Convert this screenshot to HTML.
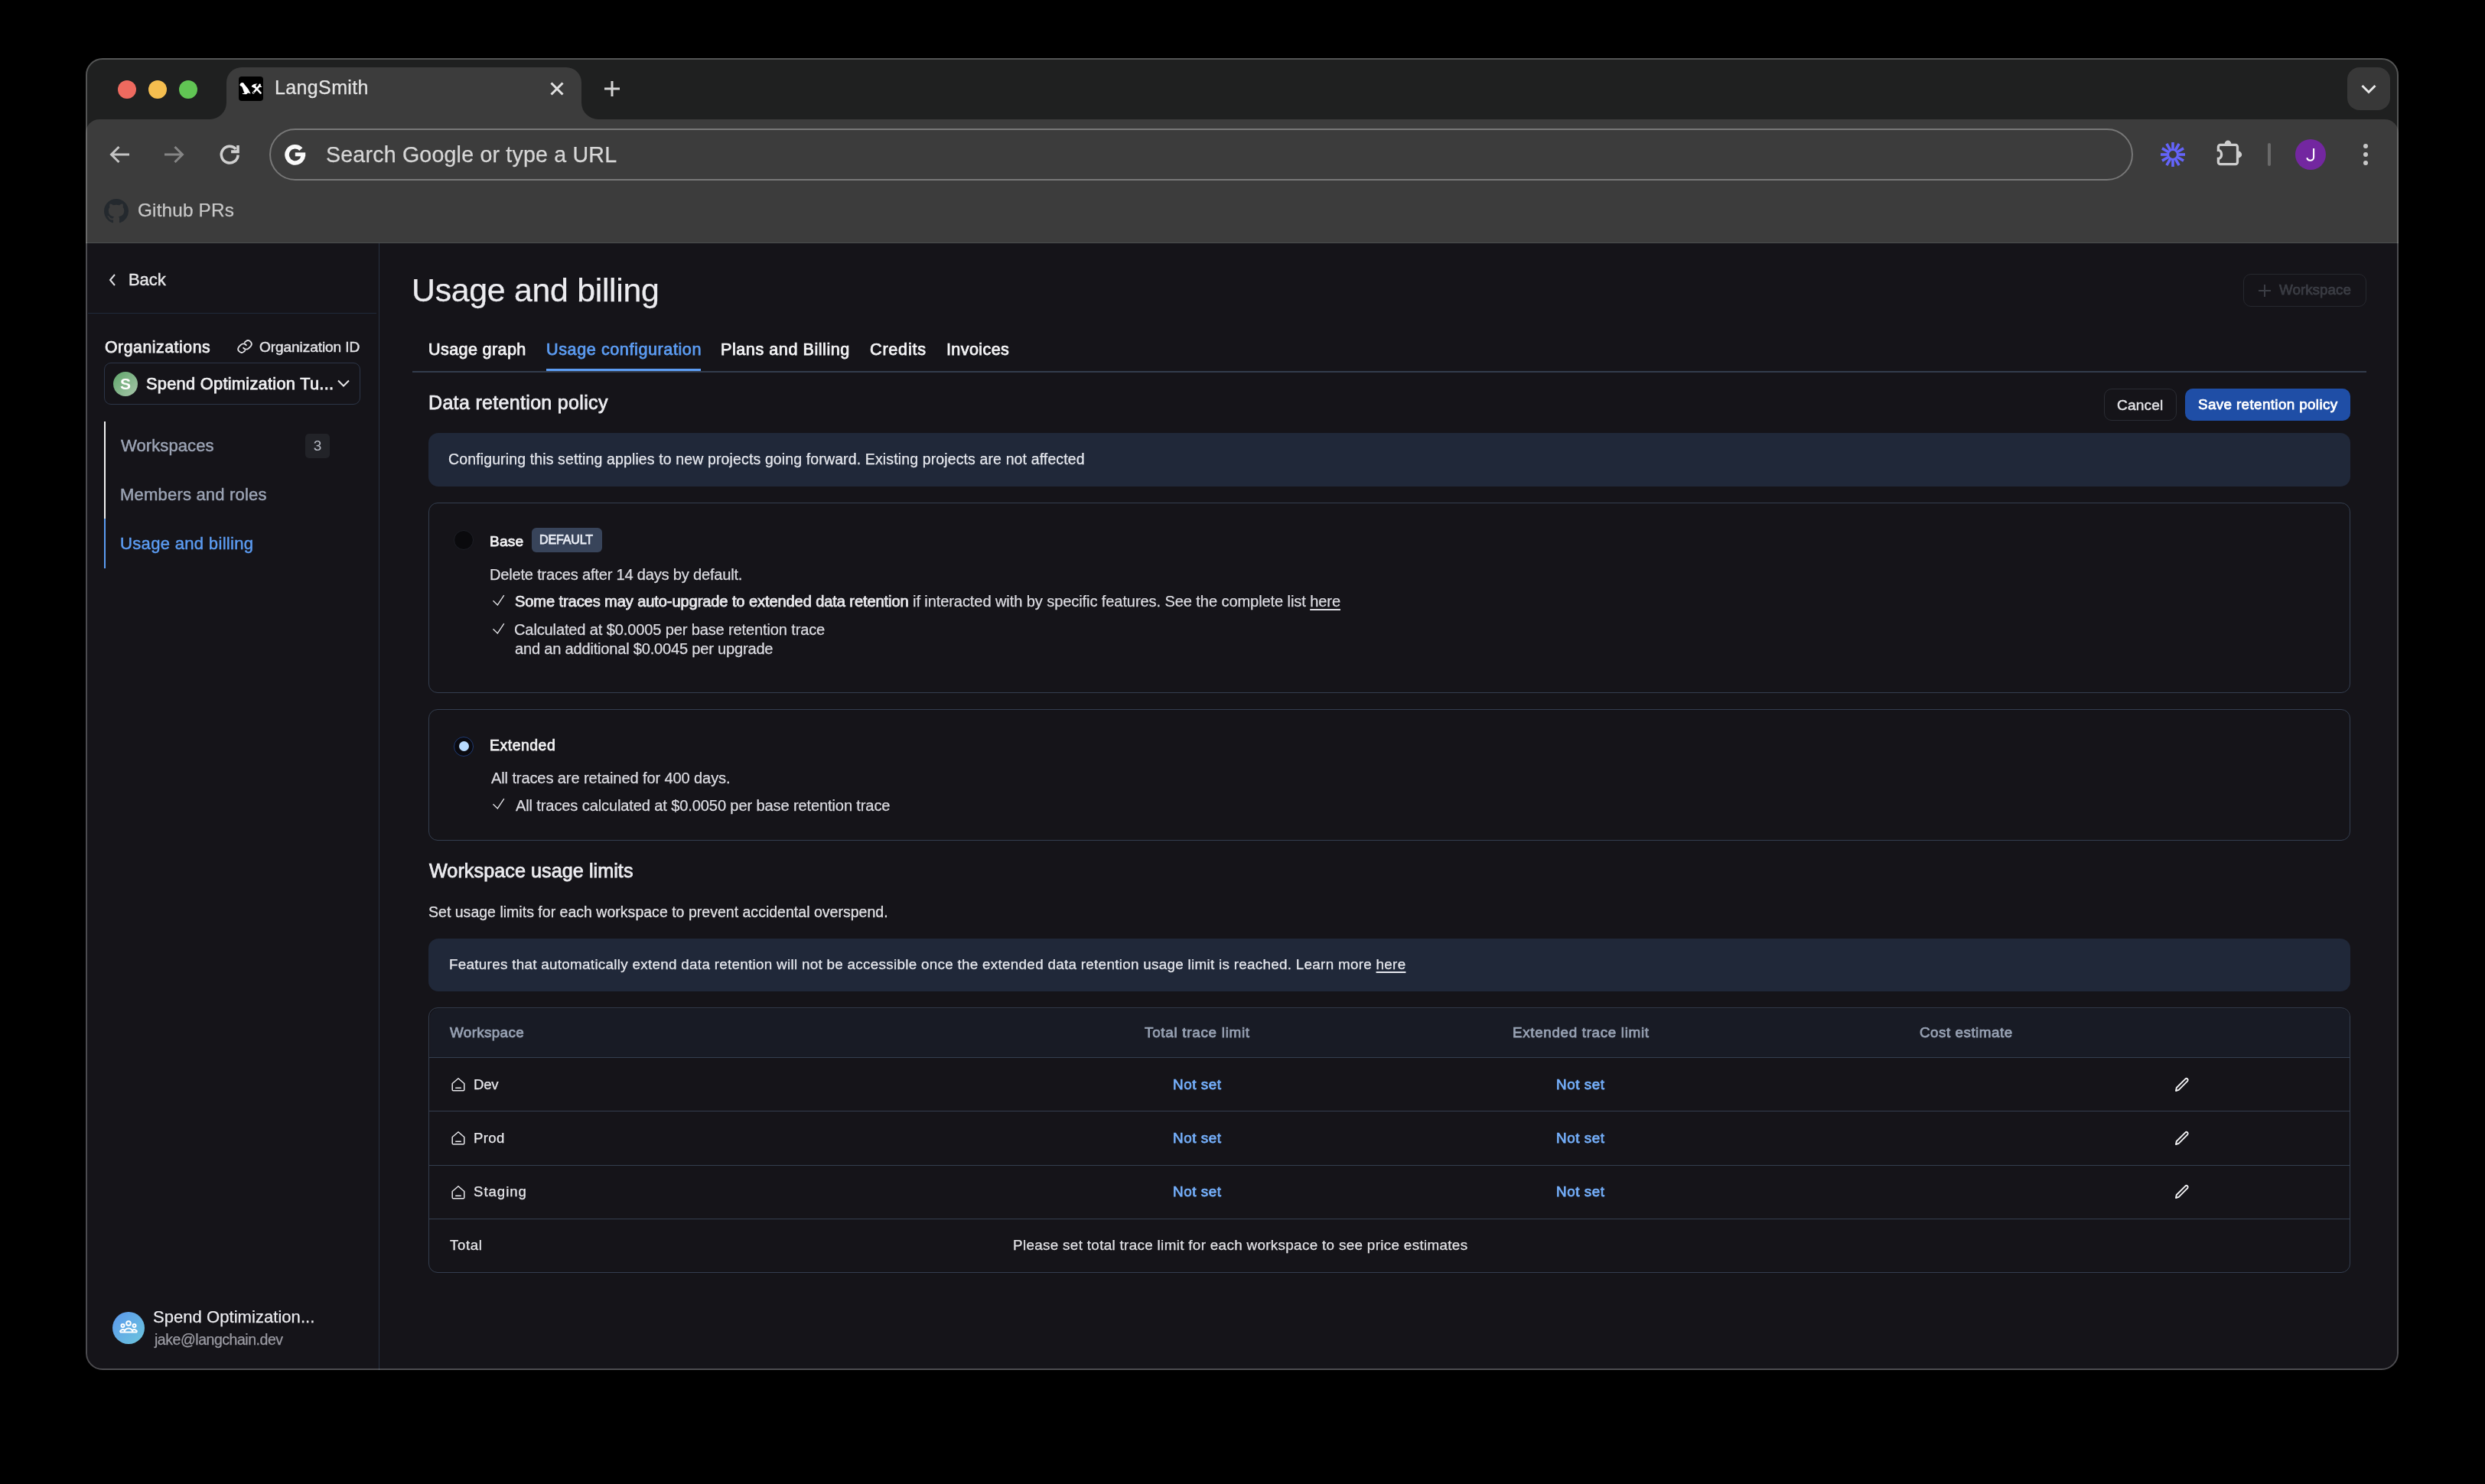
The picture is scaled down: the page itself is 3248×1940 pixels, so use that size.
<!DOCTYPE html>
<html><head><meta charset="utf-8"><title>LangSmith</title>
<style>
html,body{margin:0;padding:0;background:#000;}
body{width:3248px;height:1940px;position:relative;overflow:hidden;font-family:"Liberation Sans",sans-serif;}
.b{position:absolute;}
.t{position:absolute;white-space:pre;font-family:"Liberation Sans",sans-serif;will-change:transform;}
u{text-decoration:underline;text-underline-offset:3px;text-decoration-thickness:1.5px;}
b.sb{font-weight:400;-webkit-text-stroke:0.75px currentColor;color:#e8e8ec;}
</style></head><body>
<div id="win" style="position:absolute;left:0;top:0;width:3248px;height:1940px;clip-path:inset(76px 113px 149px 112px round 22px);">
<div class="b" style="left:112px;top:76px;width:3023px;height:114px;background:#1f2020;"></div>
<div class="b" style="left:112px;top:156px;width:3023px;height:162px;background:#3c3c3c;border-radius:18px 18px 0 0;"></div>
<div class="b" style="left:296px;top:88px;width:464px;height:70px;background:#3c3c3c;border-radius:20px 20px 0 0;"></div>
<div class="b" style="left:274px;top:134px;width:22px;height:22px;background:#3c3c3c;"></div>
<div class="b" style="left:274px;top:134px;width:22px;height:22px;background:#1f2020;border-bottom-right-radius:22px;"></div>
<div class="b" style="left:760px;top:134px;width:22px;height:22px;background:#3c3c3c;"></div>
<div class="b" style="left:760px;top:134px;width:22px;height:22px;background:#1f2020;border-bottom-left-radius:22px;"></div>
<div class="b" style="left:112px;top:316.5px;width:3023px;height:1.5px;background:#4c4f50;"></div>
<div class="b" style="left:112px;top:318px;width:3023px;height:1473px;background:#151419;"></div>
<div class="b" style="left:495px;top:318px;width:1px;height:1473px;background:#283040;"></div>
<div class="b" style="left:115px;top:409px;width:377px;height:1px;background:#1f2a3a;"></div>
</div>
<div class="b" style="left:112px;top:76px;width:3023px;height:1715px;border:2px solid rgba(255,255,255,0.24);border-radius:22px;box-sizing:border-box;"></div>
<div class="b" style="left:153.8px;top:105px;width:24px;height:24px;border-radius:50%;background:#ee6a5f;"></div>
<div class="b" style="left:193.8px;top:105px;width:24px;height:24px;border-radius:50%;background:#f5be4f;"></div>
<div class="b" style="left:233.8px;top:105px;width:24px;height:24px;border-radius:50%;background:#61c554;"></div>
<div class="b" style="left:312px;top:100px;width:32px;height:32px;background:#000;border-radius:4px;"></div>
<svg class="b" style="left:312px;top:100px" width="32" height="32" viewBox="0 0 32 32">
<path d="M1.25 11.35 C1.8 9.3 3 8.1 4.6 8 C5.8 7.9 6.7 8.6 7.3 9.9 L9.9 13.2 C11.2 14.7 12.1 15.9 12.8 17.1 C13.7 18.8 14.6 20.6 15.7 22.6 L13.5 21.8 L11.8 21.4 L11 22.5 L9.8 23.3 L5.1 23.1 C4.6 23 4.6 22.2 5.2 22.1 L7.6 21.7 C7 20.4 6.4 19.2 6 17.9 C5.4 16.3 4.9 14.6 4.2 13.6 C3.7 12.9 3 12.5 2.2 12.3 Z" fill="#fff"/>
<path d="M20.8 13.2 L28.6 21.6 M26.8 12.6 L19 21.4" stroke="#fff" stroke-width="2.5" stroke-linecap="round"/>
<path d="M16.6 13.2 C17.8 10.4 21 9.1 24.6 9.6 C22.6 10.4 22 11.6 22.5 13 L20.6 15.2 Z" fill="#fff"/>
<path d="M26 10.6 A3.3 3.3 0 0 0 30.5 13.8 L28.6 11.9 L29 10.4 L27.8 9.2 Z" fill="#fff"/>
<circle cx="19.6" cy="20.7" r="0.8" fill="#000"/>
</svg>
<svg class="b" style="left:718px;top:106px" width="20" height="20" viewBox="0 0 20 20"><path d="M2.5 2.5 L17.5 17.5 M17.5 2.5 L2.5 17.5" stroke="#e2e2e2" stroke-width="3"/></svg>
<svg class="b" style="left:789px;top:105px" width="22" height="22" viewBox="0 0 22 22"><path d="M11 1 V21 M1 11 H21" stroke="#d4d4d4" stroke-width="3"/></svg>
<div class="b" style="left:3068px;top:88px;width:56px;height:56px;background:#383838;border-radius:16px;"></div>
<svg class="b" style="left:3084px;top:104px" width="24" height="24" viewBox="0 0 24 24"><path d="M3.5 8 L12 16.5 L20.5 8" stroke="#e8e8e8" stroke-width="3" fill="none"/></svg>
<svg class="b" style="left:140px;top:186px" width="32" height="32" viewBox="0 0 32 32"><path d="M29 16 H6 M15.5 6 L5.5 16 L15.5 26" stroke="#c4c4c4" stroke-width="3" fill="none"/></svg>
<svg class="b" style="left:212px;top:186px" width="32" height="32" viewBox="0 0 32 32"><path d="M3 16 H26 M16.5 6 L26.5 16 L16.5 26" stroke="#858585" stroke-width="3" fill="none"/></svg>
<svg class="b" style="left:284px;top:186px" width="32" height="32" viewBox="0 0 32 32"><path d="M27.1 16.6 A10.9 10.9 0 1 1 24.3 8.8" stroke="#cfcfcf" stroke-width="3.5" fill="none"/><path d="M18.1 10.3 H25.2 V3.9 H28.8 V14.3 H18.1 Z" fill="#cfcfcf"/></svg>
<div class="b" style="left:352px;top:168px;width:2436px;height:68px;border:2px solid #777777;border-radius:34px;box-sizing:border-box;"></div>
<svg class="b" style="left:371px;top:188px" width="30" height="28" viewBox="0 0 30 28"><path d="M22.4 7.1 A10.6 10.6 0 1 0 25.2 15.5" stroke="#fafafa" stroke-width="5.6" fill="none"/><rect x="14.8" y="11.4" width="13.4" height="4.9" fill="#fafafa"/></svg>
<svg class="b" style="left:2824px;top:186px" width="32" height="32" viewBox="0 0 32 32"><line x1="22.60" y1="16.00" x2="32.20" y2="16.00" stroke="#6464fa" stroke-width="3.6"/><line x1="21.72" y1="19.30" x2="30.03" y2="24.10" stroke="#6464fa" stroke-width="3.6"/><line x1="19.30" y1="21.72" x2="24.10" y2="30.03" stroke="#6464fa" stroke-width="3.6"/><line x1="16.00" y1="22.60" x2="16.00" y2="32.20" stroke="#6464fa" stroke-width="3.6"/><line x1="12.70" y1="21.72" x2="7.90" y2="30.03" stroke="#6464fa" stroke-width="3.6"/><line x1="10.28" y1="19.30" x2="1.97" y2="24.10" stroke="#6464fa" stroke-width="3.6"/><line x1="9.40" y1="16.00" x2="-0.20" y2="16.00" stroke="#6464fa" stroke-width="3.6"/><line x1="10.28" y1="12.70" x2="1.97" y2="7.90" stroke="#6464fa" stroke-width="3.6"/><line x1="12.70" y1="10.28" x2="7.90" y2="1.97" stroke="#6464fa" stroke-width="3.6"/><line x1="16.00" y1="9.40" x2="16.00" y2="-0.20" stroke="#6464fa" stroke-width="3.6"/><line x1="19.30" y1="10.28" x2="24.10" y2="1.97" stroke="#6464fa" stroke-width="3.6"/><line x1="21.72" y1="12.70" x2="30.03" y2="7.90" stroke="#6464fa" stroke-width="3.6"/><circle cx="16" cy="16" r="6.2" fill="none" stroke="#6464fa" stroke-width="2.6"/></svg>
<svg class="b" style="left:2894px;top:180px" width="40" height="40" viewBox="0 0 40 40"><path d="M5.4 12 a2.7 2.7 0 0 1 2.7 -2.7 H27.8 a2.7 2.7 0 0 1 2.7 2.7 V31.9 a2.7 2.7 0 0 1 -2.7 2.7 H8.1 a2.7 2.7 0 0 1 -2.7 -2.7 V27.4 A4.2 5.5 0 0 0 5.4 16.4 Z" stroke="#cdcdcd" stroke-width="3.3" fill="none"/><path d="M13.6 8.2 A4.4 4.6 0 0 1 22.4 8.2 Z M31.6 17.6 A4.6 4.4 0 0 1 31.6 26.4 Z" fill="#cdcdcd"/></svg>
<div class="b" style="left:2964px;top:187px;width:4px;height:30px;background:#6a6a6a;border-radius:2px;"></div>
<div class="b" style="left:3000px;top:182px;width:40px;height:40px;background:#7327a0;border-radius:50%;"></div>
<svg class="b" style="left:3000px;top:182px" width="40" height="40" viewBox="0 0 40 40"><path d="M24.1 12 V23.2 A4.45 4.45 0 0 1 15.3 24.2" stroke="#ffffff" stroke-width="2.1" fill="none"/></svg>
<div class="b" style="left:3089px;top:188px;width:6px;height:6px;background:#c8c8c8;border-radius:50%;"></div>
<div class="b" style="left:3089px;top:199px;width:6px;height:6px;background:#c8c8c8;border-radius:50%;"></div>
<div class="b" style="left:3089px;top:210px;width:6px;height:6px;background:#c8c8c8;border-radius:50%;"></div>
<svg class="b" style="left:136px;top:260px" width="32" height="32" viewBox="0 0 16 16"><path fill="#24292e" d="M8 0C3.58 0 0 3.58 0 8c0 3.54 2.29 6.53 5.47 7.59.4.07.55-.17.55-.38 0-.19-.01-.82-.01-1.49-2.01.37-2.53-.49-2.69-.94-.09-.23-.48-.94-.82-1.13-.28-.15-.68-.52-.01-.53.63-.01 1.08.58 1.23.82.72 1.21 1.87.87 2.33.66.07-.52.28-.87.51-1.07-1.78-.2-3.64-.89-3.64-3.95 0-.87.31-1.59.82-2.15-.08-.2-.36-1.02.08-2.12 0 0 .67-.21 2.2.82.64-.18 1.32-.27 2-.27.68 0 1.36.09 2 .27 1.53-1.04 2.2-.82 2.2-.82.44 1.1.16 1.92.08 2.12.51.56.82 1.27.82 2.15 0 3.07-1.87 3.75-3.65 3.95.29.25.54.73.54 1.48 0 1.07-.01 1.93-.01 2.2 0 .21.15.46.55.38A8.013 8.013 0 0016 8c0-4.42-3.58-8-8-8z"/></svg>
<svg class="b" style="left:140px;top:356px" width="14" height="20" viewBox="0 0 14 20"><path d="M10 3 L4 10 L10 17" stroke="#dedee2" stroke-width="2" fill="none"/></svg>
<svg class="b" style="left:308px;top:442px" width="24" height="22" viewBox="0 0 24 24"><path d="M10 14 a5 5 0 0 0 7.5 .5 l3-3 a5 5 0 0 0 -7 -7 l-1.7 1.7 M14 10 a5 5 0 0 0 -7.5 -.5 l-3 3 a5 5 0 0 0 7 7 l1.7 -1.7" stroke="#e2e2e6" stroke-width="2" fill="none" stroke-linecap="round"/></svg>
<div class="b" style="left:136px;top:474px;width:335px;height:55px;border:1.5px solid #2c3547;border-radius:9px;box-sizing:border-box;"></div>
<div class="b" style="left:148px;top:486px;width:32px;height:32px;background:linear-gradient(135deg,#5fa66a,#a8c6ab);border-radius:50%;"></div>
<div class="t" style="left:148px;top:486px;width:32px;text-align:center;font-size:21px;line-height:32px;color:#fff;font-weight:700;">S</div>
<svg class="b" style="left:440px;top:494px" width="18" height="14" viewBox="0 0 18 14"><path d="M2 3.5 L9 10.5 L16 3.5" stroke="#e8e8ea" stroke-width="2" fill="none"/></svg>
<div class="b" style="left:136px;top:551px;width:2px;height:127px;background:#f2f2f2;"></div>
<div class="b" style="left:136px;top:678px;width:2px;height:65px;background:#5c9cf2;"></div>
<div class="b" style="left:399px;top:567px;width:32px;height:32px;background:#222328;border-radius:5px;"></div>
<div class="t" style="left:399px;top:567px;width:32px;text-align:center;font-size:19px;line-height:32px;color:#b8bcc6;">3</div>
<div class="b" style="left:147px;top:1715px;width:42px;height:42px;background:linear-gradient(135deg,#5b98ee,#6cc6dc);border-radius:50%;"></div>
<svg class="b" style="left:154px;top:1722px" width="28" height="28" viewBox="0 0 28 28"><g stroke="#fff" stroke-width="2" fill="none"><circle cx="14" cy="8" r="2.8"/><circle cx="6.5" cy="11" r="2"/><circle cx="21.5" cy="11" r="2"/><path d="M8.5 19.5 a5.5 5 0 0 1 11 0 z M3 19.5 a3.5 3.2 0 0 1 5.5 -2.8 M25 19.5 a3.5 3.2 0 0 0 -5.5 -2.8 M3 19.5 H25"/></g></svg>
<div class="b" style="left:2932px;top:358px;width:161px;height:43px;border:1.5px solid #26282e;border-radius:10px;box-sizing:border-box;"></div>
<svg class="b" style="left:2950px;top:370px" width="20" height="20" viewBox="0 0 20 20"><path d="M10 2 V18 M2 10 H18" stroke="#3b3d44" stroke-width="2"/></svg>
<div class="b" style="left:539px;top:485px;width:2554px;height:1.5px;background:#333d4d;"></div>
<div class="b" style="left:714px;top:482px;width:202px;height:3px;background:#5c9cf2;"></div>
<div class="b" style="left:2750px;top:508px;width:95px;height:42px;border:1.5px solid #2a2c33;border-radius:10px;box-sizing:border-box;"></div>
<div class="b" style="left:2856px;top:508px;width:216px;height:42px;background:#1f4ea6;border-radius:10px;"></div>
<div class="b" style="left:560px;top:566px;width:2512px;height:70px;background:#202839;border-radius:13px;"></div>
<div class="b" style="left:560px;top:657px;width:2512px;height:249px;border:1.5px solid #343e4f;border-radius:12px;box-sizing:border-box;"></div>
<div class="b" style="left:560px;top:927px;width:2512px;height:172px;border:1.5px solid #343e4f;border-radius:12px;box-sizing:border-box;"></div>
<div class="b" style="left:593px;top:693px;width:26px;height:26px;background:#0a0a0d;border:1px solid #1d1f26;border-radius:50%;box-sizing:border-box;"></div>
<div class="b" style="left:593px;top:962.5px;width:26px;height:26.0px;background:#0a0a10;border:1.5px solid #1f3a72;border-radius:50%;box-sizing:border-box;"></div>
<div class="b" style="left:599.5px;top:969px;width:13.0px;height:13px;background:#b9dcff;border-radius:50%;"></div>
<div class="b" style="left:695px;top:690px;width:92px;height:32px;background:#38445a;border-radius:6px;"></div>
<svg class="b" style="left:643px;top:777px" width="18" height="16" viewBox="0 0 18 16"><path d="M1.5 8.2 L7.3 13.9 L15.8 1.2" stroke="#e2e2e6" stroke-width="1.35" fill="none"/></svg>
<svg class="b" style="left:643px;top:814px" width="18" height="16" viewBox="0 0 18 16"><path d="M1.5 8.2 L7.3 13.9 L15.8 1.2" stroke="#e2e2e6" stroke-width="1.35" fill="none"/></svg>
<svg class="b" style="left:642.5px;top:1042.5px" width="18" height="16" viewBox="0 0 18 16"><path d="M1.5 8.2 L7.3 13.9 L15.8 1.2" stroke="#e2e2e6" stroke-width="1.35" fill="none"/></svg>
<div class="b" style="left:560px;top:1227px;width:2512px;height:69px;background:#202839;border-radius:13px;"></div>
<div class="b" style="left:560px;top:1317px;width:2512px;height:347px;border:1.5px solid #343e4f;border-radius:12px;box-sizing:border-box;overflow:hidden;"></div>
<div class="b" style="left:561.5px;top:1318.5px;width:2509.0px;height:63.5px;background:#181b25;border-radius:11px 11px 0 0;"></div>
<div class="b" style="left:561px;top:1382px;width:2510px;height:1.2999999999999545px;background:#343e4f;"></div>
<div class="b" style="left:561px;top:1452px;width:2510px;height:1.2999999999999545px;background:#343e4f;"></div>
<div class="b" style="left:561px;top:1523px;width:2510px;height:1.2999999999999545px;background:#343e4f;"></div>
<div class="b" style="left:561px;top:1593px;width:2510px;height:1.2999999999999545px;background:#343e4f;"></div>
<svg class="b" style="left:588.7px;top:1407.7px" width="20" height="20" viewBox="0 0 20 20"><path d="M2.2 8.5 L10 1.8 L17.8 8.5 V16.5 a1.3 1.3 0 0 1 -1.3 1.3 H3.5 a1.3 1.3 0 0 1 -1.3 -1.3 Z M6.2 14.3 H13.8" stroke="#e6e6ea" stroke-width="1.5" fill="none" stroke-linejoin="round"/></svg>
<svg class="b" style="left:588.7px;top:1478.2px" width="20" height="20" viewBox="0 0 20 20"><path d="M2.2 8.5 L10 1.8 L17.8 8.5 V16.5 a1.3 1.3 0 0 1 -1.3 1.3 H3.5 a1.3 1.3 0 0 1 -1.3 -1.3 Z M6.2 14.3 H13.8" stroke="#e6e6ea" stroke-width="1.5" fill="none" stroke-linejoin="round"/></svg>
<svg class="b" style="left:588.7px;top:1548.7px" width="20" height="20" viewBox="0 0 20 20"><path d="M2.2 8.5 L10 1.8 L17.8 8.5 V16.5 a1.3 1.3 0 0 1 -1.3 1.3 H3.5 a1.3 1.3 0 0 1 -1.3 -1.3 Z M6.2 14.3 H13.8" stroke="#e6e6ea" stroke-width="1.5" fill="none" stroke-linejoin="round"/></svg>
<svg class="b" style="left:2841px;top:1406.5px" width="22" height="22" viewBox="0 0 22 22"><path d="M3 19 L3.8 15 L15.5 3.3 a2 2 0 0 1 2.8 2.8 L6.6 17.8 Z" stroke="#f2f2f4" stroke-width="1.9" fill="none" stroke-linejoin="round"/></svg>
<svg class="b" style="left:2841px;top:1477px" width="22" height="22" viewBox="0 0 22 22"><path d="M3 19 L3.8 15 L15.5 3.3 a2 2 0 0 1 2.8 2.8 L6.6 17.8 Z" stroke="#f2f2f4" stroke-width="1.9" fill="none" stroke-linejoin="round"/></svg>
<svg class="b" style="left:2841px;top:1547px" width="22" height="22" viewBox="0 0 22 22"><path d="M3 19 L3.8 15 L15.5 3.3 a2 2 0 0 1 2.8 2.8 L6.6 17.8 Z" stroke="#f2f2f4" stroke-width="1.9" fill="none" stroke-linejoin="round"/></svg>
<div id="t_tab" class="t" style="left:359.0px;top:102.43px;font-size:25.00px;line-height:25.00px;color:#e4e4e4;font-weight:400;letter-spacing:0.375px;-webkit-text-stroke:0.25px currentColor;">LangSmith</div>
<div id="t_search" class="t" style="left:426.0px;top:187.78px;font-size:28.60px;line-height:28.60px;color:#d6d6d6;font-weight:400;letter-spacing:0.193px;-webkit-text-stroke:0.25px currentColor;">Search Google or type a URL</div>
<div id="t_gh" class="t" style="left:180.0px;top:263.43px;font-size:24.30px;line-height:24.30px;color:#c8c8c8;font-weight:400;letter-spacing:0.175px;-webkit-text-stroke:0.25px currentColor;">Github PRs</div>
<div id="t_back" class="t" style="left:168.0px;top:355.01px;font-size:22.07px;line-height:22.07px;color:#e8e8ea;font-weight:400;letter-spacing:-0.100px;-webkit-text-stroke:0.45px currentColor;">Back</div>
<div id="t_orgs" class="t" style="left:137.0px;top:442.72px;font-size:21.23px;line-height:21.23px;color:#f0f0f2;font-weight:400;letter-spacing:0.560px;-webkit-text-stroke:0.75px currentColor;">Organizations</div>
<div id="t_orgid" class="t" style="left:339.0px;top:444.30px;font-size:19.13px;line-height:19.13px;color:#e2e2e6;font-weight:400;letter-spacing:-0.107px;-webkit-text-stroke:0.45px currentColor;">Organization ID</div>
<div id="t_orgsel" class="t" style="left:191.0px;top:491.05px;font-size:21.79px;line-height:21.79px;color:#f0f0f2;font-weight:400;letter-spacing:0.286px;-webkit-text-stroke:0.75px currentColor;">Spend Optimization Tu...</div>
<div id="t_nav1" class="t" style="left:158.0px;top:571.81px;font-size:22.07px;line-height:22.07px;color:#9ca4b5;font-weight:400;letter-spacing:0.065px;-webkit-text-stroke:0.45px currentColor;">Workspaces</div>
<div id="t_nav2" class="t" style="left:157.0px;top:636.11px;font-size:22.07px;line-height:22.07px;color:#9ca4b5;font-weight:400;letter-spacing:0.165px;-webkit-text-stroke:0.45px currentColor;">Members and roles</div>
<div id="t_nav3" class="t" style="left:157.0px;top:700.01px;font-size:22.07px;line-height:22.07px;color:#5c9cf2;font-weight:400;letter-spacing:0.303px;-webkit-text-stroke:0.45px currentColor;">Usage and billing</div>
<div id="t_user" class="t" style="left:200.0px;top:1711.37px;font-size:22.00px;line-height:22.00px;color:#ececf0;font-weight:400;letter-spacing:0.050px;-webkit-text-stroke:0.25px currentColor;">Spend Optimization...</div>
<div id="t_email" class="t" style="left:202.0px;top:1742.35px;font-size:19.55px;line-height:19.55px;color:#9b9ba3;font-weight:400;letter-spacing:-0.476px;-webkit-text-stroke:0.25px currentColor;">jake@langchain.dev</div>
<div id="t_title" class="t" style="left:538.0px;top:357.89px;font-size:42.88px;line-height:42.88px;color:#ececf0;font-weight:400;letter-spacing:-0.313px;-webkit-text-stroke:0.25px currentColor;">Usage and billing</div>
<div id="t_tb1" class="t" style="left:560.0px;top:445.77px;font-size:21.65px;line-height:21.65px;color:#f4f4f6;font-weight:400;letter-spacing:0.340px;-webkit-text-stroke:0.75px currentColor;">Usage graph</div>
<div id="t_tb2" class="t" style="left:714.0px;top:445.77px;font-size:21.65px;line-height:21.65px;color:#5c9cf2;font-weight:400;letter-spacing:0.555px;-webkit-text-stroke:0.75px currentColor;">Usage configuration</div>
<div id="t_tb3" class="t" style="left:942.0px;top:445.77px;font-size:21.65px;line-height:21.65px;color:#f4f4f6;font-weight:400;letter-spacing:0.522px;-webkit-text-stroke:0.75px currentColor;">Plans and Billing</div>
<div id="t_tb4" class="t" style="left:1137.0px;top:445.77px;font-size:21.65px;line-height:21.65px;color:#f4f4f6;font-weight:400;letter-spacing:0.751px;-webkit-text-stroke:0.75px currentColor;">Credits</div>
<div id="t_tb5" class="t" style="left:1237.0px;top:445.77px;font-size:21.65px;line-height:21.65px;color:#f4f4f6;font-weight:400;letter-spacing:0.357px;-webkit-text-stroke:0.75px currentColor;">Invoices</div>
<div id="t_drp" class="t" style="left:560.0px;top:514.33px;font-size:25.00px;line-height:25.00px;color:#ececf0;font-weight:400;letter-spacing:0.325px;-webkit-text-stroke:0.75px currentColor;">Data retention policy</div>
<div id="t_wsbtn" class="t" style="left:2979.0px;top:370.44px;font-size:18.85px;line-height:18.85px;color:#3b3d44;font-weight:400;letter-spacing:0.000px;-webkit-text-stroke:0.75px currentColor;">Workspace</div>
<div id="t_cancel" class="t" style="left:2767.0px;top:520.00px;font-size:19.13px;line-height:19.13px;color:#e4e4e8;font-weight:400;letter-spacing:0.140px;-webkit-text-stroke:0.45px currentColor;">Cancel</div>
<div id="t_save" class="t" style="left:2873.0px;top:520.24px;font-size:18.85px;line-height:18.85px;color:#ffffff;font-weight:400;letter-spacing:0.360px;-webkit-text-stroke:0.75px currentColor;">Save retention policy</div>
<div id="t_info1" class="t" style="left:586.0px;top:591.29px;font-size:19.50px;line-height:19.50px;color:#e6e8ee;font-weight:400;letter-spacing:0.129px;-webkit-text-stroke:0.25px currentColor;">Configuring this setting applies to new projects going forward. Existing projects are not affected</div>
<div id="t_base" class="t" style="left:640.0px;top:697.74px;font-size:19.20px;line-height:19.20px;color:#f0f0f2;font-weight:400;letter-spacing:0.167px;-webkit-text-stroke:0.75px currentColor;">Base</div>
<div id="t_default" class="t" style="left:705.2px;top:697.85px;font-size:16.00px;line-height:16.00px;color:#e8ecf4;font-weight:400;letter-spacing:-0.134px;-webkit-text-stroke:0.75px currentColor;">DEFAULT</div>
<div id="t_del" class="t" style="left:640.0px;top:740.67px;font-size:20.11px;line-height:20.11px;color:#dcdce2;font-weight:400;letter-spacing:-0.217px;-webkit-text-stroke:0.25px currentColor;">Delete traces after 14 days by default.</div>
<div id="t_some" class="t" style="left:673.0px;top:775.97px;font-size:20.11px;line-height:20.11px;color:#dcdce2;font-weight:400;letter-spacing:-0.116px;-webkit-text-stroke:0.25px currentColor;"><b class="sb">Some traces may auto-upgrade to extended data retention</b> if interacted with by specific features. See the complete list <u>here</u></div>
<div id="t_calc" class="t" style="left:672.0px;top:813.37px;font-size:20.11px;line-height:20.11px;color:#dcdce2;font-weight:400;letter-spacing:-0.163px;-webkit-text-stroke:0.25px currentColor;">Calculated at $0.0005 per base retention trace</div>
<div id="t_and" class="t" style="left:673.0px;top:837.97px;font-size:20.11px;line-height:20.11px;color:#dcdce2;font-weight:400;letter-spacing:-0.221px;-webkit-text-stroke:0.25px currentColor;">and an additional $0.0045 per upgrade</div>
<div id="t_ext" class="t" style="left:640.0px;top:964.97px;font-size:19.41px;line-height:19.41px;color:#f0f0f2;font-weight:400;letter-spacing:0.529px;-webkit-text-stroke:0.75px currentColor;">Extended</div>
<div id="t_all" class="t" style="left:642.0px;top:1006.67px;font-size:20.11px;line-height:20.11px;color:#dcdce2;font-weight:400;letter-spacing:-0.136px;-webkit-text-stroke:0.25px currentColor;">All traces are retained for 400 days.</div>
<div id="t_allc" class="t" style="left:674.0px;top:1042.97px;font-size:20.11px;line-height:20.11px;color:#dcdce2;font-weight:400;letter-spacing:-0.142px;-webkit-text-stroke:0.25px currentColor;">All traces calculated at $0.0050 per base retention trace</div>
<div id="t_wul" class="t" style="left:561.0px;top:1125.76px;font-size:25.20px;line-height:25.20px;color:#ececf0;font-weight:400;letter-spacing:0.048px;-webkit-text-stroke:0.75px currentColor;">Workspace usage limits</div>
<div id="t_set" class="t" style="left:560.0px;top:1182.65px;font-size:19.55px;line-height:19.55px;color:#e2e2e6;font-weight:400;letter-spacing:0.003px;-webkit-text-stroke:0.25px currentColor;">Set usage limits for each workspace to prevent accidental overspend.</div>
<div id="t_info2" class="t" style="left:587.0px;top:1252.04px;font-size:18.85px;line-height:18.85px;color:#e6e8ee;font-weight:400;letter-spacing:0.287px;-webkit-text-stroke:0.25px currentColor;">Features that automatically extend data retention will not be accessible once the extended data retention usage limit is reached. Learn more <u>here</u></div>
<div id="t_h1" class="t" style="left:588.0px;top:1341.04px;font-size:18.85px;line-height:18.85px;color:#97a1b3;font-weight:400;letter-spacing:0.350px;-webkit-text-stroke:0.75px currentColor;">Workspace</div>
<div id="t_h2" class="t" style="left:1496.0px;top:1341.04px;font-size:18.85px;line-height:18.85px;color:#97a1b3;font-weight:400;letter-spacing:0.714px;-webkit-text-stroke:0.75px currentColor;">Total trace limit</div>
<div id="t_h3" class="t" style="left:1977.0px;top:1341.04px;font-size:18.85px;line-height:18.85px;color:#97a1b3;font-weight:400;letter-spacing:0.657px;-webkit-text-stroke:0.75px currentColor;">Extended trace limit</div>
<div id="t_h4" class="t" style="left:2509.0px;top:1341.04px;font-size:18.85px;line-height:18.85px;color:#97a1b3;font-weight:400;letter-spacing:0.500px;-webkit-text-stroke:0.75px currentColor;">Cost estimate</div>
<div id="t_r0" class="t" style="left:619.0px;top:1408.77px;font-size:18.58px;line-height:18.58px;color:#e8e8ec;font-weight:400;letter-spacing:-0.250px;-webkit-text-stroke:0.25px currentColor;">Dev</div>
<div id="t_ns0a" class="t" style="left:1533.0px;top:1408.54px;font-size:18.85px;line-height:18.85px;color:#74aef9;font-weight:400;letter-spacing:0.550px;-webkit-text-stroke:0.75px currentColor;">Not set</div>
<div id="t_ns0b" class="t" style="left:2034.0px;top:1408.54px;font-size:18.85px;line-height:18.85px;color:#74aef9;font-weight:400;letter-spacing:0.551px;-webkit-text-stroke:0.75px currentColor;">Not set</div>
<div id="t_r1" class="t" style="left:619.0px;top:1479.07px;font-size:18.58px;line-height:18.58px;color:#e8e8ec;font-weight:400;letter-spacing:0.367px;-webkit-text-stroke:0.25px currentColor;">Prod</div>
<div id="t_ns1a" class="t" style="left:1533.0px;top:1478.84px;font-size:18.85px;line-height:18.85px;color:#74aef9;font-weight:400;letter-spacing:0.550px;-webkit-text-stroke:0.75px currentColor;">Not set</div>
<div id="t_ns1b" class="t" style="left:2034.0px;top:1478.84px;font-size:18.85px;line-height:18.85px;color:#74aef9;font-weight:400;letter-spacing:0.551px;-webkit-text-stroke:0.75px currentColor;">Not set</div>
<div id="t_r2" class="t" style="left:619.0px;top:1549.47px;font-size:18.58px;line-height:18.58px;color:#e8e8ec;font-weight:400;letter-spacing:0.986px;-webkit-text-stroke:0.25px currentColor;">Staging</div>
<div id="t_ns2a" class="t" style="left:1533.0px;top:1549.24px;font-size:18.85px;line-height:18.85px;color:#74aef9;font-weight:400;letter-spacing:0.550px;-webkit-text-stroke:0.75px currentColor;">Not set</div>
<div id="t_ns2b" class="t" style="left:2034.0px;top:1549.24px;font-size:18.85px;line-height:18.85px;color:#74aef9;font-weight:400;letter-spacing:0.551px;-webkit-text-stroke:0.75px currentColor;">Not set</div>
<div id="t_total" class="t" style="left:588.0px;top:1619.07px;font-size:18.58px;line-height:18.58px;color:#e8e8ec;font-weight:400;letter-spacing:0.650px;-webkit-text-stroke:0.25px currentColor;">Total</div>
<div id="t_please" class="t" style="left:1324.0px;top:1618.84px;font-size:18.85px;line-height:18.85px;color:#e2e2e6;font-weight:400;letter-spacing:0.322px;-webkit-text-stroke:0.25px currentColor;">Please set total trace limit for each workspace to see price estimates</div>
</body></html>
